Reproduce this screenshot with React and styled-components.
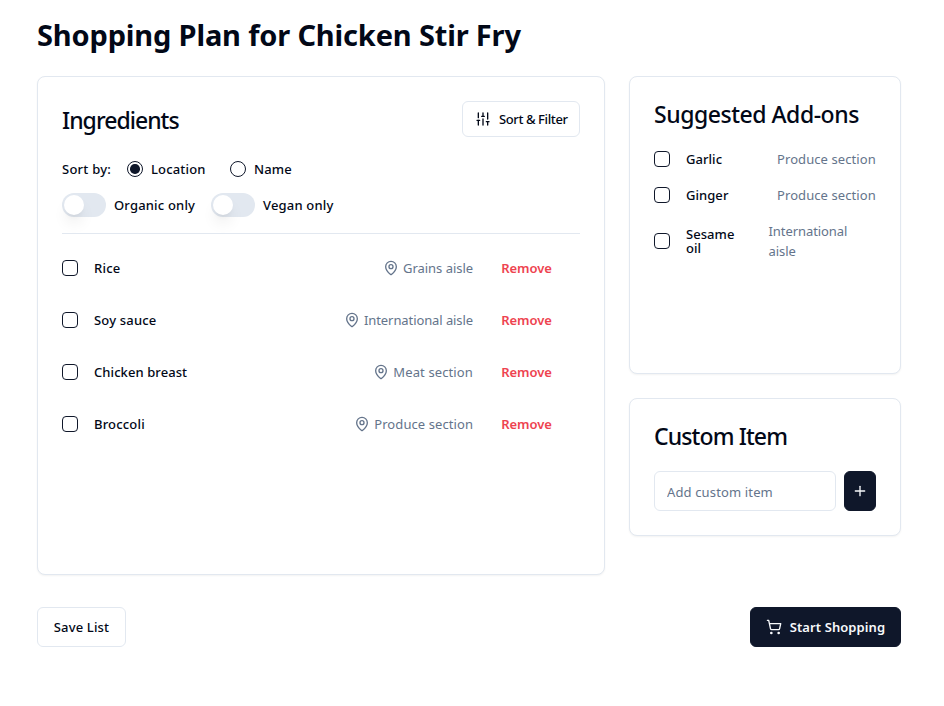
import React from "react";
import styled, { createGlobalStyle } from "styled-components";
import { MapPin, Plus, ShoppingCart, SlidersVertical } from "lucide-react";

const Global = createGlobalStyle`
  *, *::before, *::after { box-sizing: border-box; }
  body {
    margin: 0;
    background: #fff;
    color: #020817;
    font: 400 13px/20px "Noto Sans", "Open Sans", sans-serif;
  }
  h1, h2, ul { margin: 0; padding: 0; }
  ul { list-style: none; }
  button, input { font: inherit; color: inherit; letter-spacing: inherit; }
  svg { flex-shrink: 0; }
`;

const Page = styled.main`
  width: 864px;
  margin-left: 37px;
  padding-top: 17px;
`;

const Title = styled.h1`
  font-size: 29px;
  line-height: 36px;
  font-weight: 700;
  letter-spacing: -0.16px;
  margin-bottom: 23px;
  white-space: nowrap;
`;

const Columns = styled.div`
  display: grid;
  grid-template-columns: 568px 272px;
  gap: 24px;
  align-items: start;
`;

const SideColumn = styled.div`
  display: grid;
  gap: 24px;
`;

const Card = styled.section`
  height: ${(p) => p.$height}px;
  padding: 24px;
  border: 1px solid #e2e8f0;
  border-radius: 8px;
  background: #fff;
  box-shadow: 0 1px 2px rgba(0, 0, 0, 0.05);
`;

const CardTitle = styled.h2`
  font-size: 23px;
  line-height: 24px;
  font-weight: 500;
  letter-spacing: ${(p) => p.$track || 0}px;
  padding: 1px 0;
  white-space: nowrap;
`;

const CardHeader = styled.header`
  display: flex;
  align-items: center;
  justify-content: space-between;
  margin-bottom: 24px;

  ${CardTitle} { padding: 3px 0 1px; }
`;

const Button = styled.button`
  display: inline-flex;
  align-items: center;
  justify-content: ${(p) => (p.$inset ? "flex-start" : "center")};
  gap: 8px;
  width: ${(p) => p.$width}px;
  height: ${(p) => p.$height || 40}px;
  padding: 0 0 0 ${(p) => p.$inset || 0}px;
  border: 1px solid ${(p) => (p.$primary ? "#0f172a" : "#e2e8f0")};
  border-radius: 6px;
  background: ${(p) => (p.$primary ? "#0f172a" : "#fff")};
  color: ${(p) => (p.$primary ? "#f8fafc" : "#020817")};
  white-space: nowrap;
`;

const Text = styled.span`
  font-weight: ${(p) => p.$weight || 500};
  letter-spacing: ${(p) => p.$track || 0}px;
  white-space: nowrap;
`;

const SortRow = styled.div`
  display: flex;
  align-items: center;
  height: 16px;
  margin-bottom: 16px;
`;

const SortLabel = styled.div`
  width: 65px;
  display: flex;
`;

const RadioOption = styled.label`
  display: flex;
  align-items: center;
  gap: 8px;
  width: ${(p) => p.$width}px;
`;

const Radio = styled.span`
  display: grid;
  place-items: center;
  flex: none;
  width: 16px;
  height: 16px;
  border: 1px solid #0f172a;
  border-radius: 50%;

  &::after {
    content: "";
    width: 9.5px;
    height: 9.5px;
    border-radius: 50%;
    background: ${(p) => (p.$checked ? "#0f172a" : "transparent")};
  }
`;

const ToggleRow = styled.div`
  display: flex;
  height: 24px;
  margin-bottom: 16px;
`;

const ToggleOption = styled.label`
  display: flex;
  align-items: center;
  gap: 8px;
  width: 149px;
`;

const Switch = styled.span`
  flex: none;
  width: 44px;
  height: 24px;
  padding: 2px;
  border-radius: 12px;
  background: #e2e8f0;

  &::after {
    content: "";
    display: block;
    width: 20px;
    height: 20px;
    border-radius: 50%;
    background: #fff;
    box-shadow: 0 10px 15px -3px rgba(0, 0, 0, 0.1), 0 4px 6px -4px rgba(0, 0, 0, 0.1);
  }
`;

const Divider = styled.div`
  height: 1px;
  background: #e2e8f0;
  margin-bottom: 8px;
`;

const IngredientRow = styled.li`
  display: flex;
  align-items: center;
  height: 52px;
`;

const Checkbox = styled.span`
  flex: none;
  width: 16px;
  height: 16px;
  margin-right: 16px;
  border: 1px solid #0f172a;
  border-radius: 4px;
`;

const Place = styled.span`
  display: flex;
  align-items: center;
  gap: 4px;
  margin-left: auto;
  color: #64748b;
`;

const RemoveButton = styled.button`
  width: 79px;
  height: 36px;
  margin: 0 14px;
  padding: 0;
  border: 0;
  background: transparent;
  color: #ee4350;
`;

const AddonList = styled.ul`
  display: grid;
  gap: 16px;
  margin-top: 22px;
`;

const AddonRow = styled.li`
  display: flex;
  align-items: center;
`;

const AddonName = styled.div`
  font-weight: 500;
  line-height: 14px;
  width: 60px;
  letter-spacing: 0.05px;
`;

const AddonPlace = styled.div`
  margin-left: auto;
  color: #64748b;
  width: ${(p) => p.$width}px;
  letter-spacing: ${(p) => p.$track || 0}px;
`;

const CustomForm = styled.div`
  display: flex;
  gap: 8px;
  margin-top: 22px;
`;

const CustomInput = styled.input`
  width: 182px;
  height: 40px;
  padding: 1px 12px 0;
  border: 1px solid #e2e8f0;
  border-radius: 6px;
  outline: none;
  letter-spacing: 0.14px;
  &::placeholder { color: #64748b; opacity: 1; }
`;

const Footer = styled.footer`
  display: flex;
  justify-content: space-between;
  margin-top: 32px;
`;

const ingredients = [
  { name: "Rice", track: 0.22, place: "Grains aisle", placeTrack: -0.04 },
  { name: "Soy sauce", track: 0.18, place: "International aisle", placeTrack: -0.09 },
  { name: "Chicken breast", track: 0.08, place: "Meat section", placeTrack: 0.12 },
  { name: "Broccoli", track: 0.18, place: "Produce section", placeTrack: 0.08 },
];

const addons = [
  { name: "Garlic", place: "Produce section", placeWidth: 99, track: 0.08 },
  { name: "Ginger", place: "Produce section", placeWidth: 99, track: 0.08 },
  { name: "Sesame oil", place: "International aisle", placeWidth: 107.5, track: -0.07 },
];

export default function App() {
  return (
    <>
      <Global />
      <Page>
        <Title>Shopping Plan for Chicken Stir Fry</Title>
        <Columns>
          <Card $height={499}>
            <CardHeader>
              <CardTitle $track={-0.98}>Ingredients</CardTitle>
              <Button $width={118} $height={36} $inset={12}>
                <SlidersVertical size={16} />
                <Text $track={-0.4}>Sort &amp; Filter</Text>
              </Button>
            </CardHeader>
            <SortRow>
              <SortLabel><Text $track={0.25}>Sort by:</Text></SortLabel>
              <RadioOption $width={103}><Radio $checked /><Text $track={0.16}>Location</Text></RadioOption>
              <RadioOption $width={80}><Radio /><Text $track={0.1}>Name</Text></RadioOption>
            </SortRow>
            <ToggleRow>
              <ToggleOption><Switch /><Text $track={0.18}>Organic only</Text></ToggleOption>
              <ToggleOption><Switch /><Text $track={0.18}>Vegan only</Text></ToggleOption>
            </ToggleRow>
            <Divider />
            <ul>
              {ingredients.map((item) => (
                <IngredientRow key={item.name}>
                  <Checkbox />
                  <Text $track={item.track}>{item.name}</Text>
                  <Place>
                    <MapPin size={16} />
                    <Text $weight={400} $track={item.placeTrack}>{item.place}</Text>
                  </Place>
                  <RemoveButton><Text $weight={600} $track={-0.06}>Remove</Text></RemoveButton>
                </IngredientRow>
              ))}
            </ul>
          </Card>
          <SideColumn>
            <Card $height={298}>
              <CardTitle $track={-0.47}>Suggested Add-ons</CardTitle>
              <AddonList>
                {addons.map((item) => (
                  <AddonRow key={item.name}>
                    <Checkbox />
                    <AddonName>{item.name}</AddonName>
                    <AddonPlace $width={item.placeWidth} $track={item.track}>{item.place}</AddonPlace>
                  </AddonRow>
                ))}
              </AddonList>
            </Card>
            <Card $height={138}>
              <CardTitle $track={-0.88}>Custom Item</CardTitle>
              <CustomForm>
                <CustomInput placeholder="Add custom item" />
                <Button $primary $width={32} aria-label="Add"><Plus size={16} /></Button>
              </CustomForm>
            </Card>
          </SideColumn>
        </Columns>
        <Footer>
          <Button $width={89}><Text $track={0.15}>Save List</Text></Button>
          <Button $primary $width={151}>
            <ShoppingCart size={16} />
            <Text $weight={600} $track={0.09}>Start Shopping</Text>
          </Button>
        </Footer>
      </Page>
    </>
  );
}
